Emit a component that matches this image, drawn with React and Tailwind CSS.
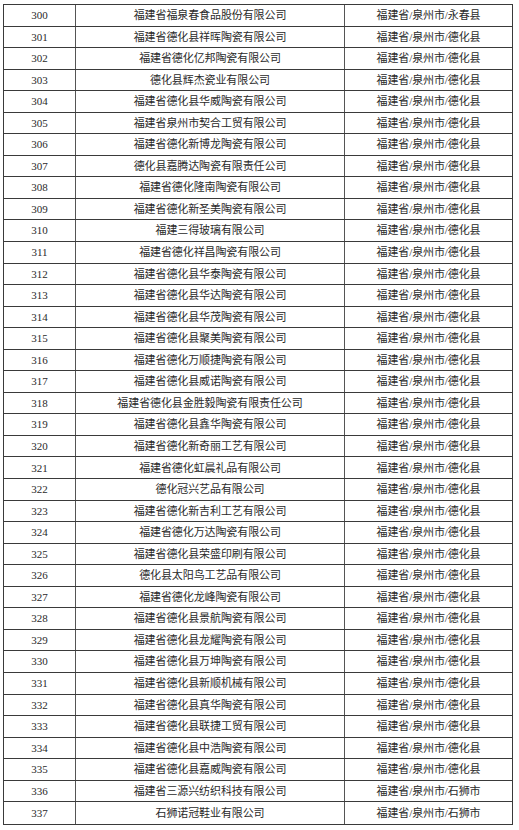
import React from 'react'

const rows = [
  ['300', '福建省福泉春食品股份有限公司', '福建省/泉州市/永春县'],
  ['301', '福建省德化县祥晖陶瓷有限公司', '福建省/泉州市/德化县'],
  ['302', '福建省德化亿邦陶瓷有限公司', '福建省/泉州市/德化县'],
  ['303', '德化县辉杰瓷业有限公司', '福建省/泉州市/德化县'],
  ['304', '福建省德化县华威陶瓷有限公司', '福建省/泉州市/德化县'],
  ['305', '福建省泉州市契合工贸有限公司', '福建省/泉州市/德化县'],
  ['306', '福建省德化新博龙陶瓷有限公司', '福建省/泉州市/德化县'],
  ['307', '德化县嘉腾达陶瓷有限责任公司', '福建省/泉州市/德化县'],
  ['308', '福建省德化隆南陶瓷有限公司', '福建省/泉州市/德化县'],
  ['309', '福建省德化新圣美陶瓷有限公司', '福建省/泉州市/德化县'],
  ['310', '福建三得玻璃有限公司', '福建省/泉州市/德化县'],
  ['311', '福建省德化祥昌陶瓷有限公司', '福建省/泉州市/德化县'],
  ['312', '福建省德化县华泰陶瓷有限公司', '福建省/泉州市/德化县'],
  ['313', '福建省德化县华达陶瓷有限公司', '福建省/泉州市/德化县'],
  ['314', '福建省德化县华茂陶瓷有限公司', '福建省/泉州市/德化县'],
  ['315', '福建省德化县聚美陶瓷有限公司', '福建省/泉州市/德化县'],
  ['316', '福建省德化万顺捷陶瓷有限公司', '福建省/泉州市/德化县'],
  ['317', '福建省德化县威诺陶瓷有限公司', '福建省/泉州市/德化县'],
  ['318', '福建省德化县金胜毅陶瓷有限责任公司', '福建省/泉州市/德化县'],
  ['319', '福建省德化县鑫华陶瓷有限公司', '福建省/泉州市/德化县'],
  ['320', '福建省德化新奇丽工艺有限公司', '福建省/泉州市/德化县'],
  ['321', '福建省德化虹晨礼品有限公司', '福建省/泉州市/德化县'],
  ['322', '德化冠兴艺品有限公司', '福建省/泉州市/德化县'],
  ['323', '福建省德化新吉利工艺有限公司', '福建省/泉州市/德化县'],
  ['324', '福建省德化万达陶瓷有限公司', '福建省/泉州市/德化县'],
  ['325', '福建省德化县荣盛印刷有限公司', '福建省/泉州市/德化县'],
  ['326', '德化县太阳鸟工艺品有限公司', '福建省/泉州市/德化县'],
  ['327', '福建省德化龙峰陶瓷有限公司', '福建省/泉州市/德化县'],
  ['328', '福建省德化县景航陶瓷有限公司', '福建省/泉州市/德化县'],
  ['329', '福建省德化县龙耀陶瓷有限公司', '福建省/泉州市/德化县'],
  ['330', '福建省德化县万坤陶瓷有限公司', '福建省/泉州市/德化县'],
  ['331', '福建省德化县新顺机械有限公司', '福建省/泉州市/德化县'],
  ['332', '福建省德化县真华陶瓷有限公司', '福建省/泉州市/德化县'],
  ['333', '福建省德化县联捷工贸有限公司', '福建省/泉州市/德化县'],
  ['334', '福建省德化县中浩陶瓷有限公司', '福建省/泉州市/德化县'],
  ['335', '福建省德化县嘉威陶瓷有限公司', '福建省/泉州市/德化县'],
  ['336', '福建省三源兴纺织科技有限公司', '福建省/泉州市/石狮市'],
  ['337', '石狮诺冠鞋业有限公司', '福建省/泉州市/石狮市'],
]

const serif = "font-['Liberation_Serif','Noto_Sans_CJK_SC',serif]"

export default function App() {
  return (
    <div className="w-[519px] h-[830px] bg-white pt-[4px] pl-[3px]">
      <div className="w-[510px] border border-[#3a3a3a] text-[#2a2a2a] text-[11px]">
        {rows.map(([no, name, area], i) => (
          <div
            key={no}
            className={`grid grid-cols-[72px_269px_1fr] h-[21.55px] ${i < rows.length - 1 ? 'border-b border-[#3a3a3a]' : ''}`}
          >
            <div className={`flex items-center justify-center border-r-[1.5px] border-[#555] ${serif}`}>
              {no}
            </div>
            <div className={`flex items-center justify-center border-r-[1.5px] border-[#555] tracking-[-0.1px] ${serif}`}>
              {name}
            </div>
            <div className={`flex items-center justify-center tracking-[-0.1px] ${serif}`}>
              {area}
            </div>
          </div>
        ))}
      </div>
    </div>
  )
}
